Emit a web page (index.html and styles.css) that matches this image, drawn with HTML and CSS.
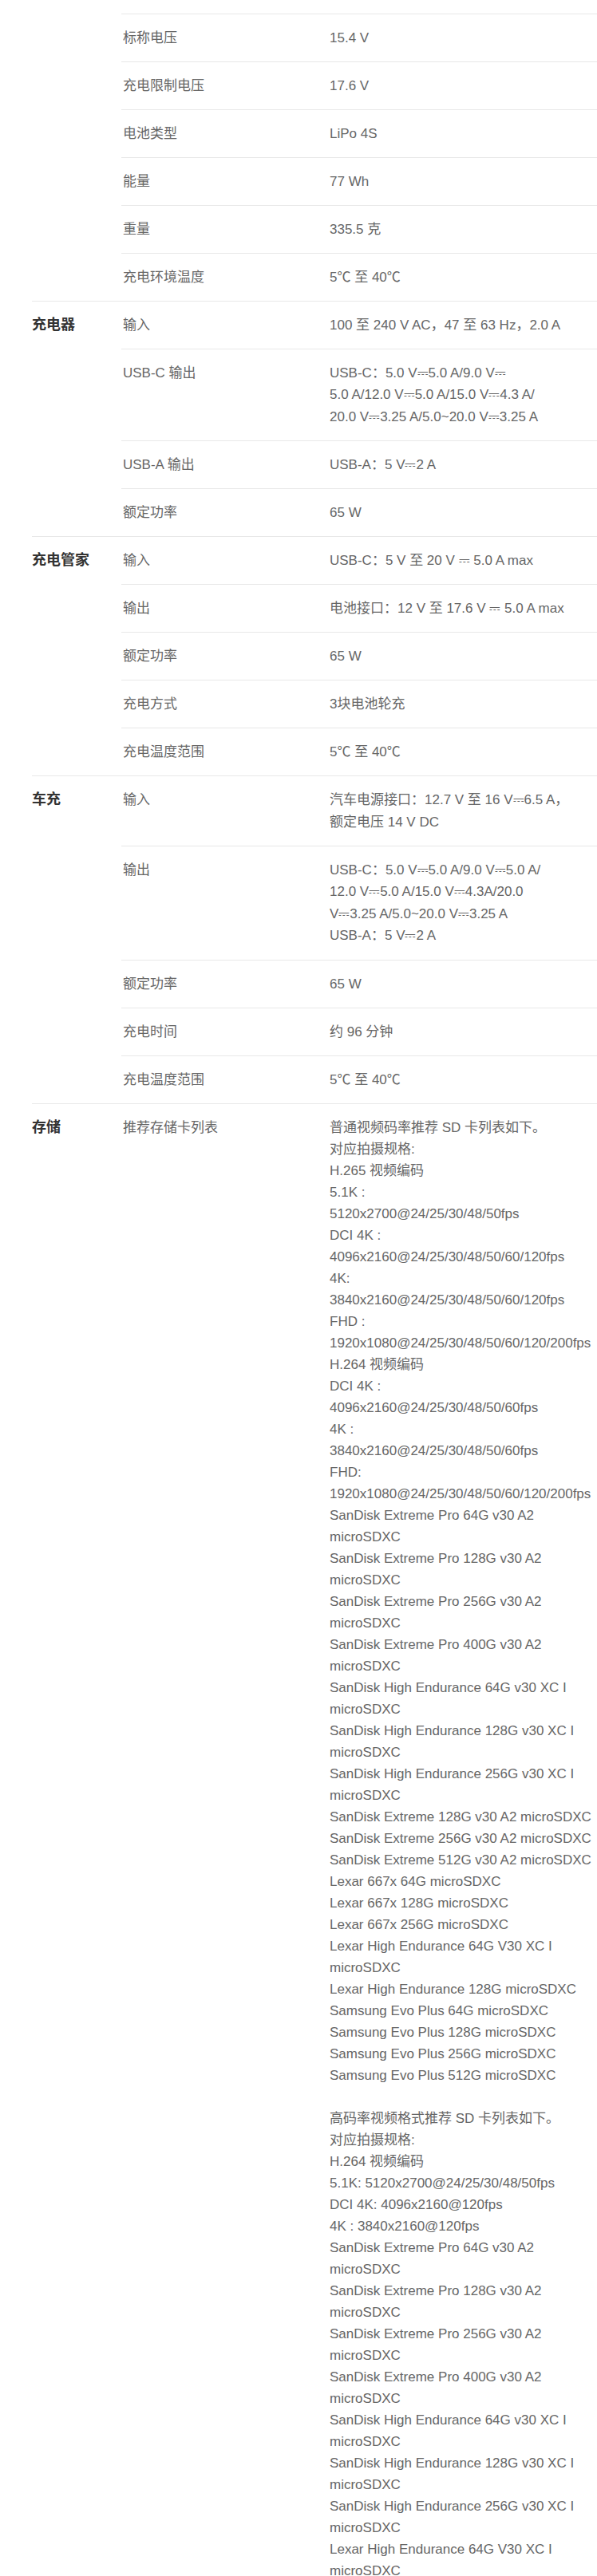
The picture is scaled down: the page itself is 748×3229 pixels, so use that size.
FILE: index.html
```html
<!DOCTYPE html>
<html lang="zh-CN">
<head>
    <meta charset="UTF-8">
    <meta name="viewport" content="width=device-width, initial-scale=1.0">
    <title>规格参数</title>
    <link rel="stylesheet" href="styles.css">
</head>
<body>
    <div class="specs">
        <section class="group continued">
            <h3 class="group-title"></h3>
            <div class="rows">
                <div class="row"><div class="label">标称电压</div><div class="value">15.4 V</div></div>
                <div class="row"><div class="label">充电限制电压</div><div class="value">17.6 V</div></div>
                <div class="row"><div class="label">电池类型</div><div class="value">LiPo 4S</div></div>
                <div class="row"><div class="label">能量</div><div class="value">77 Wh</div></div>
                <div class="row"><div class="label">重量</div><div class="value">335.5 克</div></div>
                <div class="row"><div class="label">充电环境温度</div><div class="value">5℃ 至 40℃</div></div>
            </div>
        </section>

        <section class="group">
            <h3 class="group-title">充电器</h3>
            <div class="rows">
                <div class="row"><div class="label">输入</div><div class="value">100 至 240 V AC，47 至 63 Hz，2.0 A</div></div>
                <div class="row multi">
                    <div class="label">USB-C 输出</div>
                    <div class="value">USB-C：5.0 V⎓5.0 A/9.0 V⎓<br>5.0 A/12.0 V⎓5.0 A/15.0 V⎓4.3 A/<br>20.0 V⎓3.25 A/5.0~20.0 V⎓3.25 A</div>
                </div>
                <div class="row"><div class="label">USB-A 输出</div><div class="value">USB-A：5 V⎓2 A</div></div>
                <div class="row"><div class="label">额定功率</div><div class="value">65 W</div></div>
            </div>
        </section>

        <section class="group">
            <h3 class="group-title">充电管家</h3>
            <div class="rows">
                <div class="row"><div class="label">输入</div><div class="value">USB-C：5 V 至 20 V ⎓ 5.0 A max</div></div>
                <div class="row"><div class="label">输出</div><div class="value">电池接口：12 V 至 17.6 V ⎓ 5.0 A max</div></div>
                <div class="row"><div class="label">额定功率</div><div class="value">65 W</div></div>
                <div class="row"><div class="label">充电方式</div><div class="value">3块电池轮充</div></div>
                <div class="row"><div class="label">充电温度范围</div><div class="value">5℃ 至 40℃</div></div>
            </div>
        </section>

        <section class="group">
            <h3 class="group-title">车充</h3>
            <div class="rows">
                <div class="row multi">
                    <div class="label">输入</div>
                    <div class="value">汽车电源接口：12.7 V 至 16 V⎓6.5 A，<br>额定电压 14 V DC</div>
                </div>
                <div class="row multi">
                    <div class="label">输出</div>
                    <div class="value">USB-C：5.0 V⎓5.0 A/9.0 V⎓5.0 A/<br>12.0 V⎓5.0 A/15.0 V⎓4.3A/20.0<br>V⎓3.25 A/5.0~20.0 V⎓3.25 A<br>USB-A：5 V⎓2 A</div>
                </div>
                <div class="row"><div class="label">额定功率</div><div class="value">65 W</div></div>
                <div class="row"><div class="label">充电时间</div><div class="value">约 96 分钟</div></div>
                <div class="row"><div class="label">充电温度范围</div><div class="value">5℃ 至 40℃</div></div>
            </div>
        </section>

        <section class="group">
            <h3 class="group-title">存储</h3>
            <div class="rows">
                <div class="row">
                    <div class="label">推荐存储卡列表</div>
                    <div class="value">
                        <p>普通视频码率推荐 SD 卡列表如下。<br>
                        对应拍摄规格:<br>
                        H.265 视频编码<br>
                        5.1K :<br>
                        5120x2700@24/25/30/48/50fps<br>
                        DCI 4K :<br>
                        4096x2160@24/25/30/48/50/60/120fps<br>
                        4K:<br>
                        3840x2160@24/25/30/48/50/60/120fps<br>
                        FHD :<br>
                        1920x1080@24/25/30/48/50/60/120/200fps<br>
                        H.264 视频编码<br>
                        DCI 4K :<br>
                        4096x2160@24/25/30/48/50/60fps<br>
                        4K :<br>
                        3840x2160@24/25/30/48/50/60fps<br>
                        FHD:<br>
                        1920x1080@24/25/30/48/50/60/120/200fps<br>
                        SanDisk Extreme Pro 64G v30 A2<br>
                        microSDXC<br>
                        SanDisk Extreme Pro 128G v30 A2<br>
                        microSDXC<br>
                        SanDisk Extreme Pro 256G v30 A2<br>
                        microSDXC<br>
                        SanDisk Extreme Pro 400G v30 A2<br>
                        microSDXC<br>
                        SanDisk High Endurance 64G v30 XC I<br>
                        microSDXC<br>
                        SanDisk High Endurance 128G v30 XC I<br>
                        microSDXC<br>
                        SanDisk High Endurance 256G v30 XC I<br>
                        microSDXC<br>
                        SanDisk Extreme 128G v30 A2 microSDXC<br>
                        SanDisk Extreme 256G v30 A2 microSDXC<br>
                        SanDisk Extreme 512G v30 A2 microSDXC<br>
                        Lexar 667x 64G microSDXC<br>
                        Lexar 667x 128G microSDXC<br>
                        Lexar 667x 256G microSDXC<br>
                        Lexar High Endurance 64G V30 XC I<br>
                        microSDXC<br>
                        Lexar High Endurance 128G microSDXC<br>
                        Samsung Evo Plus 64G microSDXC<br>
                        Samsung Evo Plus 128G microSDXC<br>
                        Samsung Evo Plus 256G microSDXC<br>
                        Samsung Evo Plus 512G microSDXC</p>
                        <p>高码率视频格式推荐 SD 卡列表如下。<br>
                        对应拍摄规格:<br>
                        H.264 视频编码<br>
                        5.1K: 5120x2700@24/25/30/48/50fps<br>
                        DCI 4K: 4096x2160@120fps<br>
                        4K : 3840x2160@120fps<br>
                        SanDisk Extreme Pro 64G v30 A2<br>
                        microSDXC<br>
                        SanDisk Extreme Pro 128G v30 A2<br>
                        microSDXC<br>
                        SanDisk Extreme Pro 256G v30 A2<br>
                        microSDXC<br>
                        SanDisk Extreme Pro 400G v30 A2<br>
                        microSDXC<br>
                        SanDisk High Endurance 64G v30 XC I<br>
                        microSDXC<br>
                        SanDisk High Endurance 128G v30 XC I<br>
                        microSDXC<br>
                        SanDisk High Endurance 256G v30 XC I<br>
                        microSDXC<br>
                        Lexar High Endurance 64G V30 XC I<br>
                        microSDXC</p>
                    </div>
                </div>
            </div>
        </section>
    </div>
</body>
</html>
```

FILE: styles.css
```css
body {
    margin: 0;
    font-family: "Liberation Sans", "Noto Sans CJK SC", sans-serif;
    color: #666;
    background: #fff;
    overflow-x: hidden;
}
.specs {
    padding: 17px 0 0 40px;
}
.group {
    display: grid;
    grid-template-columns: 112px 1fr;
    border-top: 1px solid #e8e8e8;
}
.group.continued {
    border-top: none;
}
.group-title {
    margin: 0;
    padding: 16px 0;
    font-size: 18px;
    line-height: 27px;
    font-weight: bold;
    color: #333;
}
.row {
    display: grid;
    grid-template-columns: 261px 1fr;
    padding: 16px 0;
    border-top: 1px solid #e8e8e8;
    font-size: 17px;
    line-height: 27px;
}
.row.multi {
    line-height: 27.4px;
}
.group:not(.continued) .row:first-child {
    border-top: none;
}
.label {
    padding-left: 2px;
}
.value {
    white-space: nowrap;
}
.value p {
    margin: 0;
}
.value p + p {
    margin-top: 27px;
}
```
